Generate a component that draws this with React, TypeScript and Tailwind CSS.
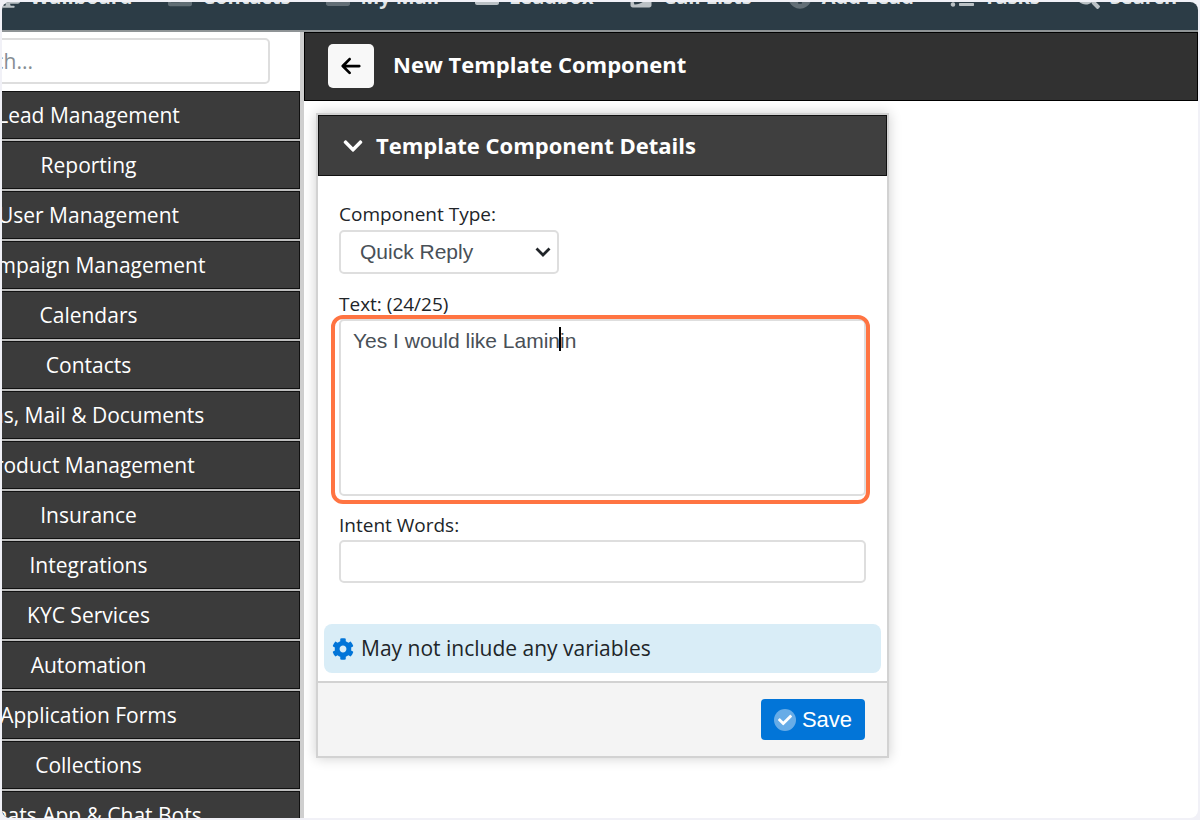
/* New template component page: top nav, side menu and the component form */

import React, { useState } from 'react';
import {
  FaAddressCard,
  FaCheck,
  FaChevronDown,
  FaCog,
  FaDesktop,
  FaEnvelope,
  FaInbox,
  FaPhoneSquare,
  FaPlusCircle,
  FaSearch,
  FaTasks,
} from 'react-icons/fa';
import { FaArrowLeft } from 'react-icons/fa6';

// ------------------ data ------------------

const NAV = [
  { label: 'Wallboard', icon: FaDesktop, tone: 'opacity-80' },
  { label: 'Contacts', icon: FaAddressCard, tone: 'opacity-30' },
  { label: 'My Mail', icon: FaEnvelope, tone: 'opacity-30' },
  { label: 'Leadbox', icon: FaInbox, tone: 'opacity-80' },
  { label: 'Call Lists', icon: FaPhoneSquare, tone: 'opacity-80' },
  { label: 'Add Lead', icon: FaPlusCircle, tone: 'opacity-30' },
  { label: 'Tasks', icon: FaTasks, tone: 'opacity-80' },
  { label: 'Search', icon: FaSearch, tone: 'opacity-80' },
];

const MENU = [
  'Lead Management',
  'Reporting',
  'User Management',
  'Campaign Management',
  'Calendars',
  'Contacts',
  'Sms, Mail & Documents',
  'Product Management',
  'Insurance',
  'Integrations',
  'KYC Services',
  'Automation',
  'Application Forms',
  'Collections',
  'Whats App & Chat Bots',
];

const MAX_TEXT = 25;

const fieldClass =
  'block w-full rounded-[5px] border-2 border-[#dedede] bg-white font-["Liberation_Sans",Arial,sans-serif] text-[21px] text-[#495057] outline-none';

// ------------------ parts ------------------

const TopNav: React.FC = () => (
  <header className="flex h-[30px] shrink-0 items-end overflow-hidden border-b-2 border-[#8f9496] bg-[#2c3c46] pb-[21px]">
    <nav className="-ml-2.5 flex shrink-0 gap-8">
      {NAV.map(({ label, icon: Icon, tone }) => (
        <a key={label} href="#" className="flex shrink-0 items-center gap-1.5 text-[20px] leading-6 font-bold text-[#dfe3e5]">
          <span className="flex w-8 justify-center">
            <Icon className={`size-6 ${tone}`} />
          </span>
          {label}
        </a>
      ))}
    </nav>
  </header>
);

const SideMenu: React.FC = () => (
  <aside className="flex w-[302px] shrink-0 justify-end overflow-hidden border-r-4 border-[#cfcfcf]">
    <div className="w-[423px] shrink-0">
      <div className="flex h-[59px] items-start justify-end bg-white pt-1.5 pr-[30px]">
        <input
          type="search"
          aria-label="Search"
          placeholder="Search..."
          className="h-[46px] w-[334px] rounded-[5px] border-2 border-[#dedede] px-3 text-[21px] outline-none placeholder:text-[#868e94]"
        />
      </div>
      <ul className="bg-[#bdbdbd]">
        {MENU.map((item) => (
          <li key={item} className="pb-0.5">
            <a
              href="#"
              className="flex h-12 items-center justify-center border border-[#111] bg-[#3b3b3b] pt-0.5 text-[21px] font-medium text-white"
            >
              {item}
            </a>
          </li>
        ))}
      </ul>
    </div>
  </aside>
);

const ComponentForm: React.FC = () => {
  const [text, setText] = useState('Yes I would like Laminin');

  return (
    <form className="mt-3 ml-3 w-[573px] border-2 border-[#d2d2d2] bg-white shadow-[0_0_12px_rgba(0,0,0,0.2)]">
      <h2 className="flex h-[61px] items-center gap-3 border border-[#111] bg-[#3f3f3f] pl-[23px] text-[22px] font-bold text-white">
        <FaChevronDown className="size-[22px]" />
        Template Component Details
      </h2>

      <div className="px-[21px] pt-[25px] text-[19px] leading-[26px] text-[#212529]">
        <label htmlFor="type" className="block">Component Type:</label>
        <div className="relative mt-[3px] w-[220px]">
          <select id="type" className={`${fieldClass} h-11 appearance-none pl-[19px]`}>
            <option>Quick Reply</option>
          </select>
          <svg viewBox="0 0 16 10" className="pointer-events-none absolute top-[17px] right-2 h-2.5 w-4">
            <path d="M1.5 1.5 8 8l6.500-6.500" fill="none" stroke="#212529" strokeWidth="2.800" />
          </svg>
        </div>

        <label htmlFor="text" className="mt-[17px] block">
          Text: (24/{MAX_TEXT})
        </label>
        <div className="relative mt-0.5">
          <textarea
            id="text"
            value={text}
            onChange={(e) => setText(e.target.value)}
            className={`${fieldClass} h-[177px] resize-none px-3 py-1.5 leading-[28px]`}
          />
          {/* focus highlight and caret */}
          <div className="pointer-events-none absolute -top-1 -right-1 -bottom-2 -left-2 rounded-xl border-4 border-[#ff7442]" />
          <div className="pointer-events-none absolute top-2 left-[220px] h-6 w-0.5 bg-black" />
        </div>

        <label htmlFor="intent" className="mt-4 block">Intent Words:</label>
        <input id="intent" type="text" className={`${fieldClass} mt-0.5 h-[43px] px-3`} />
      </div>

      <p className="mx-1.5 mt-[41px] mb-2 flex h-[49px] items-center gap-[7px] rounded-lg bg-[#d9edf7] pl-2 text-[21px] text-[#212529]">
        <FaCog className="size-[22px] text-[#0275d8]" />
        May not include any variables
      </p>

      <div className="flex h-[75px] items-center justify-end border-t-2 border-[#d2d2d2] bg-[#f4f4f4] pr-[22px]">
        <button
          type="button"
          className="flex h-[41px] w-[104px] items-center justify-center gap-1.5 rounded bg-[#0275d8] font-['Liberation_Sans',Arial,sans-serif] text-[22px] text-white"
        >
          <span className="flex size-[22px] items-center justify-center rounded-full bg-white/40">
            <FaCheck className="size-3.5" />
          </span>
          Save
        </button>
      </div>
    </form>
  );
};

// ------------------ page ------------------

const App: React.FC = () => (
  <div className="h-screen bg-[#f1f1f7] p-0.5 font-['Open_Sans','Noto_Sans',sans-serif]">
    <div className="flex h-full flex-col overflow-hidden rounded-lg bg-white">
      <TopNav />
      <div className="flex min-h-0 flex-1">
        <SideMenu />
        <main className="min-w-0 flex-1">
          <div className="flex h-[69px] items-center gap-[19px] border border-black bg-[#313131] pb-px pl-[23px]">
            <button
              type="button"
              aria-label="Back"
              className="flex h-11 w-[46px] items-center justify-center rounded-[5px] bg-[#f8f8f8] text-black"
            >
              <FaArrowLeft className="size-[22px]" />
            </button>
            <h1 className="pb-1 text-[22px] font-bold text-white">New Template Component</h1>
          </div>
          <ComponentForm />
        </main>
      </div>
    </div>
  </div>
);

export default App;
